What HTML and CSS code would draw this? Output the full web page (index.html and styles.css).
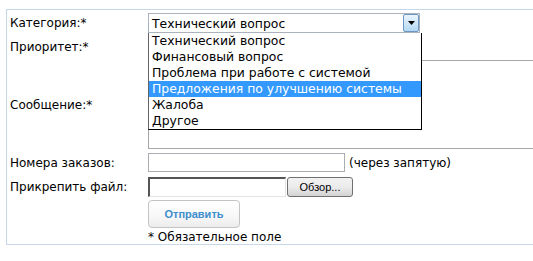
FILE: index.html
```html
<!DOCTYPE html>
<html lang="ru">
<head>
<meta charset="utf-8">
<title>Форма</title>
<link rel="stylesheet" href="styles.css">
</head>
<body>
<div class="box">
  <div class="form">
    <div class="label r1">Категория:*</div>
    <div class="field r1">
      <div class="select">
        <span class="sel-text">Технический вопрос</span>
        <span class="arrow"><svg width="7" height="4" viewBox="0 0 7 4"><path d="M0 0H7L3.5 4Z" fill="#000"/></svg></span>
        <ul class="list">
          <li>Технический вопрос</li>
          <li>Финансовый вопрос</li>
          <li>Проблема при работе с системой</li>
          <li class="hl">Предложения по улучшению системы</li>
          <li>Жалоба</li>
          <li>Другое</li>
        </ul>
      </div>
    </div>

    <div class="label r2">Приоритет:*</div>
    <div class="field r2"><div class="select"></div></div>

    <div class="label r3">Сообщение:*</div>
    <div class="field r3"><div class="textarea"></div></div>

    <div class="label r4">Номера заказов:</div>
    <div class="field r4"><div class="input"></div><span class="hint">(через запятую)</span></div>

    <div class="label r5">Прикрепить файл:</div>
    <div class="field r5"><div class="file-input"></div><span class="browse">Обзор...</span></div>

    <div class="label r6"></div>
    <div class="field r6"><span class="submit">Отправить</span></div>

    <div class="label r7"></div>
    <div class="field r7 note">* Обязательное поле</div>
  </div>
</div>
</body>
</html>
```

FILE: styles.css
```css
html, body {
  margin: 0;
  padding: 0;
  background: #fff;
  overflow: hidden;
}
body {
  width: 533px;
  height: 261px;
  font-family: "DejaVu Sans", Verdana, sans-serif;
  font-size: 12px;
  color: #000;
}
.box {
  margin: 9px 0 0 6px;
  width: 527px;
  border: 1px solid #c6d9ec;
  border-right: none;
  padding: 3px 0 0 3px;
  height: 236px;
  box-sizing: border-box;
}
.form {
  display: grid;
  grid-template-columns: 138px 1fr;
  grid-template-rows: 20px 19px 89px 19px 20px 28px 18px;
  row-gap: 4px;
}
.label, .field {
  display: flex;
  align-items: center;
  white-space: nowrap;
}
.r5 { margin-top: 1px; }
.r7 { margin-top: -2px; }

.select {
  position: relative;
  width: 272px;
  height: 20px;
  box-sizing: border-box;
  border: 1px solid #a9b2bd;
  background: #fff;
  display: flex;
  align-items: center;
  font-size: 12.4px;
}
.sel-text {
  padding-left: 3px;
}
.arrow {
  position: absolute;
  right: 0;
  top: 0;
  width: 16px;
  height: 18px;
  box-sizing: border-box;
  border: 1px solid #6d97c3;
  border-radius: 2px;
  background: linear-gradient(#eaf4fc, #cfe6f8 50%, #b3d8f2);
  display: flex;
  align-items: center;
  justify-content: center;
}
.list {
  position: absolute;
  left: -1px;
  top: 19px;
  width: 274px;
  margin: 0;
  padding: 0;
  list-style: none;
  background: #fff;
  box-sizing: border-box;
  border-left: 1px solid #646464;
  border-right: 1px solid #000;
  border-bottom: 1px solid #000;
  z-index: 5;
}
.list li {
  height: 16px;
  line-height: 16px;
  padding-left: 3px;
}
.list li.hl {
  background: #3399ff;
  color: #fff;
}
.textarea {
  width: 385px;
  height: 89px;
  box-sizing: border-box;
  border: 1px solid #a6a6a6;
  border-right: none;
  background: #fff;
}
.input {
  width: 197px;
  height: 19px;
  box-sizing: border-box;
  border: 1px solid #abadb3;
}
.hint {
  margin-left: 4px;
}
.file-input {
  width: 138px;
  height: 20px;
  box-sizing: border-box;
  border-top: 2px solid #555;
  border-left: 2px solid #555;
  border-right: 1px solid #e3e3e3;
  border-bottom: 1px solid #e3e3e3;
}
.browse {
  margin-left: 1px;
  width: 66px;
  height: 20px;
  box-sizing: border-box;
  border: 1px solid #707070;
  border-radius: 3px;
  background: linear-gradient(#f2f2f2, #ebebeb 50%, #d3d3d3);
  font-family: "Liberation Sans", Arial, sans-serif;
  font-size: 11px;
  display: flex;
  align-items: center;
  justify-content: center;
}
.submit {
  width: 92px;
  height: 28px;
  box-sizing: border-box;
  border: 1px solid #c4c4c4;
  border-radius: 4px;
  background: linear-gradient(#ffffff, #f7f7f7 60%, #ececec);
  color: #3d8ecc;
  font-family: "Liberation Sans", Arial, sans-serif;
  font-weight: bold;
  font-size: 11px;
  display: flex;
  align-items: center;
  justify-content: center;
}
.note {
  align-items: flex-start;
}
```
